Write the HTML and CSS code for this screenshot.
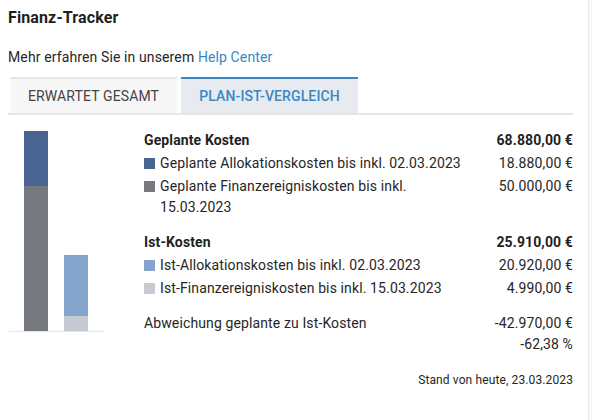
FILE: index.html
```html
<!DOCTYPE html>
<html lang="de">
<head>
  <meta charset="UTF-8" />
  <meta name="viewport" content="width=device-width, initial-scale=1.0"/>
  <title>Finanz-Tracker</title>
  <link rel="stylesheet" href="styles.css">
</head>
<body>
  <div class="card">
    <h1 class="title">Finanz-Tracker</h1>
    <p class="intro">Mehr erfahren Sie in unserem <a href="#">Help Center</a></p>

    <div class="tabs">
      <div class="tab">Erwartet gesamt</div>
      <div class="tab active">Plan-Ist-Vergleich</div>
    </div>

    <div class="compare">
      <div class="chart">
        <div class="bar">
          <div class="seg plan-alloc" style="height: 55px"></div>
          <div class="seg plan-event" style="height: 145px"></div>
        </div>
        <div class="bar">
          <div class="seg ist-alloc" style="height: 61px"></div>
          <div class="seg ist-event" style="height: 15px"></div>
        </div>
      </div>

      <div class="table">
        <div class="group">
          <div class="row head">
            <span class="label">Geplante Kosten</span>
            <span class="amount">68.880,00 €</span>
          </div>
          <div class="row">
            <span class="label"><i class="sq plan-alloc"></i><span>Geplante Allokationskosten bis inkl. 02.03.2023</span></span>
            <span class="amount">18.880,00 €</span>
          </div>
          <div class="row">
            <span class="label"><i class="sq plan-event"></i><span>Geplante Finanzereigniskosten bis inkl. 15.03.2023</span></span>
            <span class="amount">50.000,00 €</span>
          </div>
        </div>

        <div class="group">
          <div class="row head">
            <span class="label">Ist-Kosten</span>
            <span class="amount">25.910,00 €</span>
          </div>
          <div class="row">
            <span class="label"><i class="sq ist-alloc"></i><span>Ist-Allokationskosten bis inkl. 02.03.2023</span></span>
            <span class="amount">20.920,00 €</span>
          </div>
          <div class="row">
            <span class="label"><i class="sq ist-event"></i><span>Ist-Finanzereigniskosten bis inkl. 15.03.2023</span></span>
            <span class="amount">4.990,00 €</span>
          </div>
        </div>

        <div class="group">
          <div class="row">
            <span class="label">Abweichung geplante zu Ist-Kosten</span>
            <span class="amount">-42.970,00 €<br>-62,38 %</span>
          </div>
        </div>
      </div>
    </div>

    <div class="stand">Stand von heute, 23.03.2023</div>
  </div>
</body>
</html>
```

FILE: styles.css
```css
* {
  margin: 0;
  padding: 0;
  box-sizing: border-box;
}
body {
  font-family: Roboto, "Liberation Sans", Arial, sans-serif;
  font-size: 14px;
  letter-spacing: 0.12px;
  color: #262626;
  background-color: #f8f8f8;
}
.card {
  width: 589px;
  min-height: 420px;
  padding: 9px 15px 0 8px;
  background-color: #fff;
  border-right: 1px solid #ebebeb;
}
.title {
  font-size: 16px;
  font-weight: bold;
  line-height: 18px;
  color: #1f1f1f;
}
.intro {
  margin-top: 21px;
  line-height: 18px;
}
.intro a {
  color: #3a87c4;
  text-decoration: none;
}
.tabs {
  display: flex;
  gap: 4px;
  margin-top: 11px;
  padding-left: 2px;
  border-bottom: 2px solid #e6e6e6;
}
.tab {
  width: 167px;
  height: 36px;
  line-height: 34px;
  text-align: center;
  text-transform: uppercase;
  color: #444;
  background-color: #f7f7f7;
  border-top: 2px solid #e6e6e6;
}
.tab.active {
  width: 177px;
  color: #3a87c4;
  font-weight: 500;
  background-color: #e7eaee;
  border-top-color: #3a87c4;
}
.compare {
  display: grid;
  grid-template-columns: 136px 1fr;
  margin-top: 14px;
}
.chart {
  display: flex;
  align-items: flex-end;
  gap: 16px;
  width: 95px;
  height: 203px;
  margin-left: 1px;
  padding-left: 15px;
  border-bottom: 1px solid #e6e6e6;
}
.bar {
  width: 24px;
  display: flex;
  flex-direction: column;
}
.plan-alloc { background-color: #4a6591; }
.plan-event { background-color: #76797e; }
.ist-alloc { background-color: #86a5cc; }
.ist-event { background-color: #c6cad1; }
.group + .group {
  margin-top: 12px;
}
.row {
  display: grid;
  grid-template-columns: 1fr 100px;
  padding: 1px 0;
  line-height: 21px;
}
.row.head {
  font-weight: bold;
  color: #1f1f1f;
}
.label {
  display: flex;
  align-items: flex-start;
}
.sq {
  flex: none;
  width: 11px;
  height: 11px;
  margin: 5px 5px 0 0;
}
.amount {
  text-align: right;
}
.stand {
  margin-top: 16px;
  font-size: 12px;
  text-align: right;
  line-height: 16px;
}
```
